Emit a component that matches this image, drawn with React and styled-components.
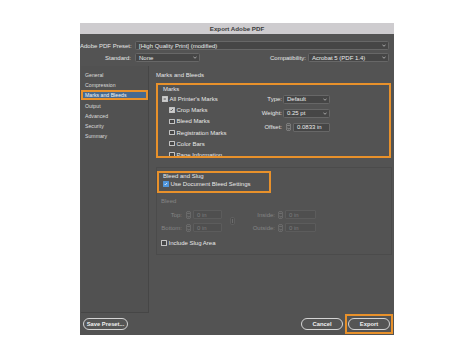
import React from 'react';
import styled, { createGlobalStyle, css } from 'styled-components';

const ORANGE = '#e8912b';

const Global = createGlobalStyle`
  html, body { margin: 0; padding: 0; background: #ffffff; }
  body { font-family: "Liberation Sans", Arial, sans-serif; }
  #root { width: 474px; height: 359px; overflow: hidden; }
`;

const Page = styled.div`
  width: 474px;
  height: 359px;
  box-sizing: border-box;
  padding: 23px 0 0 80px;
`;

const Dialog = styled.div`
  width: 314px;
  height: 312px;
  background: #535353;
  display: flex;
  flex-direction: column;
  font-size: 6px;
  color: #e4e4e4;
`;

const TitleBar = styled.div`
  height: 11px;
  flex: none;
  background: #cecccf;
  color: #3b3b3b;
  font-weight: 700;
  font-size: 6.2px;
  display: flex;
  align-items: center;
  justify-content: center;
`;

const TopFields = styled.div`
  display: flex;
  flex-direction: column;
  gap: 3px;
  padding: 7px 5px 0 0;
`;

const FieldRow = styled.div`
  display: flex;
  align-items: center;
  height: 9px;
`;

const RowLabel = styled.div`
  width: ${(p) => p.$w || 51}px;
  text-align: right;
  margin-right: ${(p) => p.$gap ?? 4}px;
  white-space: nowrap;
  color: #e6e6e6;
  flex: none;
`;

const Spacer = styled.div`
  flex: 1;
`;

const SelectBox = styled.div`
  box-sizing: border-box;
  height: ${(p) => p.$h || 9}px;
  width: ${(p) => (p.$w ? `${p.$w}px` : 'auto')};
  flex: ${(p) => (p.$grow ? 1 : 'none')};
  background: #464646;
  border: 1px solid #676767;
  border-radius: 1.5px;
  padding: 0 2px 0 3px;
  display: flex;
  align-items: center;
  justify-content: space-between;
  color: #ececec;
  white-space: nowrap;
`;

const Chevron = () => (
  <svg width="4" height="3" viewBox="0 0 4 3">
    <path d="M0.4 0.6 L2 2.3 L3.6 0.6" fill="none" stroke="#bdbdbd" strokeWidth="0.8" />
  </svg>
);

const Select = ({ children, ...rest }) => (
  <SelectBox {...rest}>
    <span>{children}</span>
    <Chevron />
  </SelectBox>
);

const Main = styled.div`
  display: flex;
  height: 247px;
  margin-top: 4px;
  padding: 0 2px 0 1px;
  gap: 3px;
`;

const Sidebar = styled.div`
  width: 68px;
  flex: none;
  box-sizing: border-box;
  background: #515151;
  border-right: 1px solid #464646;
  border-bottom: 1px solid #464646;
  padding-top: 3.5px;
  font-size: 5.2px;
`;

const NavItem = styled.div`
  height: 10.3px;
  box-sizing: border-box;
  display: flex;
  align-items: center;
  padding-left: 4px;
  color: #dcdcdc;
  ${(p) =>
    p.$active &&
    css`
      background: #46698f;
      color: #f4f4f4;
      border: 2px solid ${ORANGE};
      padding-left: 2px;
    `}
`;

const Content = styled.div`
  flex: 1;
  padding: 5px 0 0 4px;
  display: flex;
  flex-direction: column;
`;

const Heading = styled.div`
  height: 8px;
  line-height: 8px;
  color: #e6e6e6;
  margin-bottom: 4px;
`;

const MarksBox = styled.div`
  box-sizing: border-box;
  width: 235px;
  height: 75px;
  border: 2px solid ${ORANGE};
  overflow: hidden;
  padding-left: 5px;
  display: grid;
  grid-template-columns: 1fr auto;
  grid-template-rows: 8px 1fr;
`;

const GroupTitle = styled.div`
  grid-column: 1 / 3;
  height: 8px;
  line-height: 8px;
  color: #e8e8e8;
`;

const CheckList = styled.div`
  display: flex;
  flex-direction: column;
  padding-top: 0.4px;
`;

const CheckRow = styled.div`
  display: flex;
  align-items: center;
  gap: 2px;
  height: ${(p) => p.$h || 11.2}px;
  padding-left: ${(p) => (p.$indent ? 7 : 0)}px;
  margin-left: ${(p) => (p.$flush ? 0 : -1)}px;
  color: #e8e8e8;
  white-space: nowrap;
`;

const Box = styled.span`
  box-sizing: border-box;
  width: 5.5px;
  height: 5.5px;
  flex: none;
  display: inline-flex;
  align-items: center;
  justify-content: center;
  border-radius: 0.6px;
  border: 0.8px solid ${(p) => (p.$variant === 'blue' ? '#4f95dc' : '#c4c4c4')};
  background: ${(p) =>
    p.$variant === 'blue' ? '#4f95dc' : p.$variant === 'checked' || p.$variant === 'mixed' ? '#cdcdcd' : '#474747'};
`;

const Checkbox = ({ variant }) => (
  <Box $variant={variant}>
    {variant === 'checked' && (
      <svg width="4" height="4" viewBox="0 0 4 4">
        <path d="M0.6 2 L1.6 3 L3.4 0.8" fill="none" stroke="#333" strokeWidth="0.8" />
      </svg>
    )}
    {variant === 'blue' && (
      <svg width="4" height="4" viewBox="0 0 4 4">
        <path d="M0.6 2 L1.6 3 L3.4 0.8" fill="none" stroke="#ffffff" strokeWidth="0.8" />
      </svg>
    )}
    {variant === 'mixed' && (
      <svg width="4" height="4" viewBox="0 0 4 4">
        <path d="M0.7 2 L3.3 2" fill="none" stroke="#333" strokeWidth="0.9" />
      </svg>
    )}
  </Box>
);

const MarksOptions = styled.div`
  display: grid;
  grid-template-columns: auto 47px;
  grid-auto-rows: 8.5px;
  column-gap: 1px;
  row-gap: 5.5px;
  align-items: center;
  align-content: start;
  padding-top: 2px;
  margin-right: 59px;
`;

const OptLabel = styled.div`
  text-align: right;
  color: #e6e6e6;
  white-space: nowrap;
`;

const SpinField = styled.div`
  display: flex;
  align-items: center;
  gap: 2px;
  height: 100%;
  padding-left: 3px;
`;

const SpinIconWrap = styled.span`
  display: inline-flex;
  flex: none;
  opacity: ${(p) => (p.$dim ? 0.55 : 1)};
`;

const SpinIcon = ({ dim }) => (
  <SpinIconWrap $dim={dim}>
    <svg width="5" height="8" viewBox="0 0 5 8">
      <rect x="0.4" y="0.4" width="4.2" height="7.2" rx="1.6" fill="none" stroke="#9c9c9c" strokeWidth="0.6" />
      <path d="M1.4 3 L2.5 1.9 L3.6 3" fill="none" stroke="#c8c8c8" strokeWidth="0.6" />
      <path d="M1.4 5 L2.5 6.1 L3.6 5" fill="none" stroke="#c8c8c8" strokeWidth="0.6" />
    </svg>
  </SpinIconWrap>
);

const TextInput = styled.div`
  box-sizing: border-box;
  height: ${(p) => p.$h || 8.5}px;
  flex: 1;
  background: ${(p) => (p.$dim ? '#4f4f4f' : '#464646')};
  border: 1px solid ${(p) => (p.$dim ? '#5c5c5c' : '#676767')};
  border-radius: 1px;
  padding-left: 3px;
  display: flex;
  align-items: center;
  color: ${(p) => (p.$dim ? '#7d7d7d' : '#ececec')};
  white-space: nowrap;
`;

const BleedGroup = styled.div`
  box-sizing: border-box;
  width: 236px;
  height: 88px;
  margin-top: 9px;
  border: 1px solid #4b4b4b;
  padding-top: 3px;
  display: flex;
  flex-direction: column;
`;

const SlugHighlight = styled.div`
  box-sizing: border-box;
  width: 114px;
  height: 22px;
  border: 2px solid ${ORANGE};
  padding: 0 0 0 4px;
  display: flex;
  flex-direction: column;
`;

const SubTitle = styled.div`
  height: ${(p) => p.$h || 7}px;
  line-height: ${(p) => p.$h || 7}px;
  color: ${(p) => (p.$dim ? '#858585' : '#e8e8e8')};
  padding-left: ${(p) => p.$pad || 0}px;
  margin-top: ${(p) => p.$mt || 0}px;
`;

const BleedGrid = styled.div`
  display: grid;
  grid-template-columns: 29px 7px 29px 20px 36px 7px 31px;
  grid-template-rows: 9px 9px;
  row-gap: 4px;
  align-items: center;
  margin-top: 5px;
  color: #858585;
`;

const GridLabel = styled.div`
  grid-column: ${(p) => p.$col || 'auto'};
  text-align: right;
  padding-right: ${(p) => p.$pr ?? 4}px;
  white-space: nowrap;
`;

const GridSpin = styled.div`
  display: flex;
  align-items: center;
`;

const LinkCell = styled.div`
  grid-column: 4;
  grid-row: 1 / 3;
  display: flex;
  justify-content: center;
  align-items: center;
  padding-left: 1px;
`;

const LinkIcon = () => (
  <svg width="5" height="8" viewBox="0 0 5 8">
    <rect x="0.5" y="0.5" width="4" height="7" rx="1" fill="#4f4f4f" stroke="#6a6a6a" strokeWidth="0.6" />
    <path d="M2.5 2 L2.5 6" stroke="#7a7a7a" strokeWidth="0.7" />
  </svg>
);

const SlugRow = styled.div`
  margin-top: 7px;
  padding-left: 5px;
`;

const Footer = styled.div`
  flex: 1;
  display: flex;
  align-items: center;
  padding: 0 1px 1px 3px;
`;

const Button = styled.button`
  box-sizing: border-box;
  height: 12px;
  width: ${(p) => p.$w}px;
  padding: 0;
  border: 1px solid #d4d4d4;
  border-radius: 6px;
  background: #555555;
  color: #efefef;
  font-family: "Liberation Sans", Arial, sans-serif;
  font-size: 5.8px;
  font-weight: 700;
  display: flex;
  align-items: center;
  justify-content: center;
`;

const ExportFrame = styled.div`
  box-sizing: border-box;
  width: 48px;
  height: 20px;
  margin-left: 2px;
  border: 2px solid ${ORANGE};
  display: flex;
  align-items: center;
  justify-content: center;
`;

const navItems = ['General', 'Compression', 'Marks and Bleeds', 'Output', 'Advanced', 'Security', 'Summary'];

const marks = [
  { label: "All Printer's Marks", variant: 'mixed' },
  { label: 'Crop Marks', variant: 'checked', indent: true },
  { label: 'Bleed Marks', indent: true },
  { label: 'Registration Marks', indent: true },
  { label: 'Color Bars', indent: true },
  { label: 'Page Information', indent: true },
];

export default function App() {
  return (
    <>
      <Global />
      <Page>
        <Dialog>
          <TitleBar>Export Adobe PDF</TitleBar>
          <TopFields>
            <FieldRow>
              <RowLabel>Adobe PDF Preset:</RowLabel>
              <Select $grow>[High Quality Print] (modified)</Select>
            </FieldRow>
            <FieldRow>
              <RowLabel>Standard:</RowLabel>
              <Select $w={65}>None</Select>
              <Spacer />
              <RowLabel $w={60} $gap={2}>Compatibility:</RowLabel>
              <Select $w={81}>Acrobat 5 (PDF 1.4)</Select>
            </FieldRow>
          </TopFields>
          <Main>
            <Sidebar>
              {navItems.map((n) => (
                <NavItem key={n} $active={n === 'Marks and Bleeds'}>
                  {n}
                </NavItem>
              ))}
            </Sidebar>
            <Content>
              <Heading>Marks and Bleeds</Heading>
              <MarksBox>
                <GroupTitle>Marks</GroupTitle>
                <CheckList>
                  {marks.map((m) => (
                    <CheckRow key={m.label} $indent={m.indent}>
                      <Checkbox variant={m.variant} />
                      {m.label}
                    </CheckRow>
                  ))}
                </CheckList>
                <MarksOptions>
                  <OptLabel>Type:</OptLabel>
                  <Select $h={8.5}>Default</Select>
                  <OptLabel>Weight:</OptLabel>
                  <Select $h={8.5}>0.25 pt</Select>
                  <OptLabel>Offset:</OptLabel>
                  <SpinField>
                    <SpinIcon />
                    <TextInput>0.0833 in</TextInput>
                  </SpinField>
                </MarksOptions>
              </MarksBox>
              <BleedGroup>
                <SlugHighlight>
                  <SubTitle>Bleed and Slug</SubTitle>
                  <CheckRow $h={8} $flush>
                    <Checkbox variant="blue" />
                    Use Document Bleed Settings
                  </CheckRow>
                </SlugHighlight>
                <SubTitle $dim $pad={4} $mt={4} $h={8}>
                  Bleed
                </SubTitle>
                <BleedGrid>
                  <GridLabel>Top:</GridLabel>
                  <GridSpin><SpinIcon dim /></GridSpin>
                  <TextInput $dim $h={9}>0 in</TextInput>
                  <LinkCell><LinkIcon /></LinkCell>
                  <GridLabel $pr={3}>Inside:</GridLabel>
                  <GridSpin><SpinIcon dim /></GridSpin>
                  <TextInput $dim $h={9}>0 in</TextInput>
                  <GridLabel>Bottom:</GridLabel>
                  <GridSpin><SpinIcon dim /></GridSpin>
                  <TextInput $dim $h={9}>0 in</TextInput>
                  <GridLabel $pr={3} $col={5}>Outside:</GridLabel>
                  <GridSpin><SpinIcon dim /></GridSpin>
                  <TextInput $dim $h={9}>0 in</TextInput>
                </BleedGrid>
                <SlugRow>
                  <CheckRow $h={8}>
                    <Checkbox />
                    Include Slug Area
                  </CheckRow>
                </SlugRow>
              </BleedGroup>
            </Content>
          </Main>
          <Footer>
            <Button $w={45}>Save Preset...</Button>
            <Spacer />
            <Button $w={42}>Cancel</Button>
            <ExportFrame>
              <Button $w={42}>Export</Button>
            </ExportFrame>
          </Footer>
        </Dialog>
      </Page>
    </>
  );
}
